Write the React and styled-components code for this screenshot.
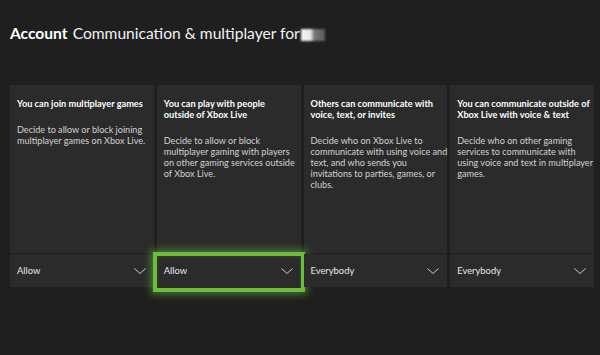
import styled, { createGlobalStyle } from 'styled-components';

const GlobalStyle = createGlobalStyle`
  html, body {
    margin: 0;
    padding: 0;
    background: #1f1f1f;
  }
  body {
    font-family: Lato, "Open Sans", sans-serif;
    color: #fff;
  }
`;

const Page = styled.div`
  width: 600px;
  height: 355px;
  background: #1f1f1f;
  overflow: hidden;
`;

const Header = styled.h1`
  margin: 0;
  padding: 0 0 0 10px;
  height: 66px;
  box-sizing: border-box;
  display: flex;
  align-items: center;
  font-size: 15.6px;
  font-weight: 400;
  color: #f2f2f2;
`;

const Section = styled.span`
  font-weight: 700;
  margin-right: 5px;
  color: #fff;
`;

const Blur = styled.span`
  display: inline-block;
  width: 24px;
  height: 12px;
  margin-left: 1px;
  margin-top: 3px;
  background: linear-gradient(90deg, #f4f4f4 0%, #e8e8e8 40%, #777 55%, #5a5a5a 100%);
  filter: blur(0.8px);
`;

const Grid = styled.div`
  display: grid;
  grid-template-columns: repeat(4, minmax(0, 1fr));
  gap: 3px;
  margin: 19px 6px 0 10px;
`;

const Card = styled.div`
  height: 202px;
  min-width: 0;
  background: #2b2b2b;
  display: flex;
  flex-direction: column;
`;

const Body = styled.div`
  flex: 1;
  padding: 13px 5px 0 7px;
  border-bottom: 1px solid #1f1f1f;
`;

const Title = styled.div`
  font-size: 9.2px;
  font-weight: 700;
  line-height: 11px;
  color: #fff;
  margin-bottom: 15px;
`;

const Desc = styled.div`
  font-size: 9.1px;
  line-height: 11px;
  color: #d2d2d2;
`;

const Line = styled.div`
  white-space: nowrap;
`;

const Select = styled.div`
  position: relative;
  height: 33px;
  display: flex;
  align-items: center;
  justify-content: space-between;
  padding: 0 7px 0 7px;
  font-size: 9.4px;
  color: #e6e6e6;
  background: #2b2b2b;
`;

const Focus = styled.div`
  position: absolute;
  left: -4px;
  right: -4px;
  top: -2px;
  bottom: -5px;
  border: 4px solid #6dbd3a;
  box-shadow: 0 0 8px 2px rgba(110, 200, 60, 0.55), inset 0 0 3px rgba(110, 200, 60, 0.3);
  pointer-events: none;
`;

const Chevron = () => (
  <svg width="14" height="8" viewBox="0 0 14 8">
    <path d="M1.5 1.5 L7 6.5 L12.5 1.5" fill="none" stroke="#cfcfcf" strokeWidth="1" />
  </svg>
);

const settings = [
  {
    title: ['You can join multiplayer games'],
    desc: ['Decide to allow or block joining', 'multiplayer games on Xbox Live.'],
    value: 'Allow',
  },
  {
    title: ['You can play with people', 'outside of Xbox Live'],
    desc: [
      'Decide to allow or block',
      'multiplayer gaming with players',
      'on other gaming services outside',
      'of Xbox Live.',
    ],
    value: 'Allow',
    focused: true,
  },
  {
    title: ['Others can communicate with', 'voice, text, or invites'],
    desc: [
      'Decide who on Xbox Live to',
      'communicate with using voice and',
      'text, and who sends you',
      'invitations to parties, games, or',
      'clubs.',
    ],
    value: 'Everybody',
  },
  {
    title: ['You can communicate outside of', 'Xbox Live with voice & text'],
    desc: [
      'Decide who on other gaming',
      'services to communicate with',
      'using voice and text in multiplayer',
      'games.',
    ],
    value: 'Everybody',
  },
];

export default () => (
  <Page>
    <GlobalStyle />
    <Header>
      <Section>Account</Section>
      Communication &amp; multiplayer for
      <Blur />
    </Header>
    <Grid>
      {settings.map((s) => (
        <Card key={s.title[0]}>
          <Body>
            <Title>
              {s.title.map((l) => <Line key={l}>{l}</Line>)}
            </Title>
            <Desc>
              {s.desc.map((l) => <Line key={l}>{l}</Line>)}
            </Desc>
          </Body>
          <Select>
            {s.value}
            <Chevron />
            {s.focused && <Focus />}
          </Select>
        </Card>
      ))}
    </Grid>
  </Page>
);
